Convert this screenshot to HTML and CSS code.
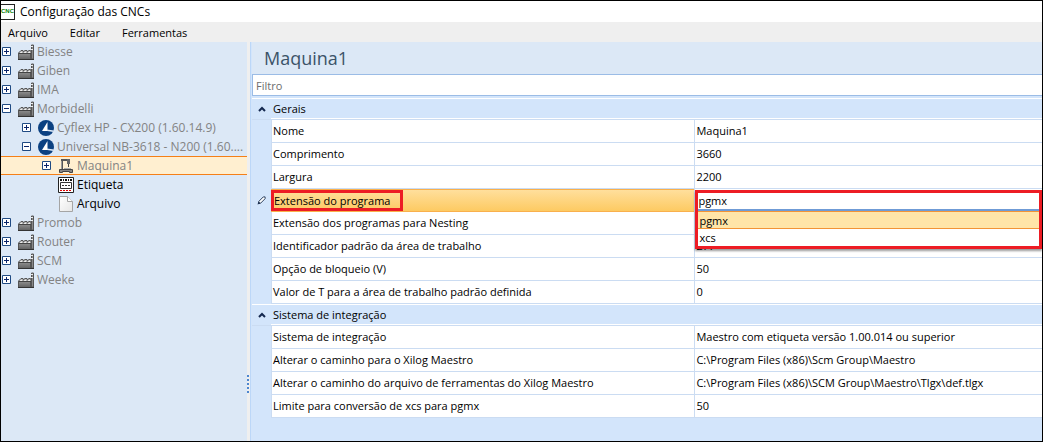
FILE: index.html
```html
<!DOCTYPE html>
<html lang="pt-BR">
<head>
    <meta charset="UTF-8">
    <meta name="viewport" content="width=device-width, initial-scale=1.0">
    <title>Configuração das CNCs</title>
    <link rel="stylesheet" href="styles.css">
</head>
<body>

<svg class="sprites" aria-hidden="true">
    <defs>
        <linearGradient id="metal" x1="0" y1="0" x2="0" y2="1">
            <stop offset="0" stop-color="#a5a5a5"/>
            <stop offset="1" stop-color="#606060"/>
        </linearGradient>
        <linearGradient id="paper" x1="0" y1="0" x2="1" y2="1">
            <stop offset="0" stop-color="#ffffff"/>
            <stop offset="1" stop-color="#e6e6e6"/>
        </linearGradient>
    </defs>
    <symbol id="factory" viewBox="0 0 16 16">
        <path d="M0.500 15.500V9L3 6.500H5V8L7 6.500H9V8L11 6.500H12.500V15.500Z" fill="url(#metal)" stroke="#555"/>
        <path d="M1.500 9L3 7.500H5L4 9ZM5.500 9L7 7.500H9L8 9ZM9.500 9L11 7.500H12.500V9Z" fill="#eee"/>
        <path d="M1 9.500H13" stroke="#444"/>
        <path d="M13.500 15V1H15.500V15Z" fill="#888" stroke="#555"/>
        <path d="M13 2.500H15M13 5.500H15" stroke="#eee"/>
        <path d="M0 15.500H16" stroke="#333"/>
    </symbol>
    <symbol id="brand" viewBox="0 0 16 16">
        <circle cx="8" cy="8" r="8" fill="#0b4182"/>
        <path d="M9.500 2L4 11H9.500Z" fill="#fff"/>
        <path d="M9 9.500L16 10.500L15.500 12L9 11Z" fill="#dce8f6"/>
    </symbol>
    <symbol id="machine" viewBox="0 0 16 16">
        <path d="M3 1H12V3H5V12H3Z" fill="#555"/>
        <path d="M3.500 3V11" stroke="#999"/>
        <path d="M9 1H12V6H9Z" fill="#666"/>
        <path d="M10.500 6V9" stroke="#444"/>
        <path d="M6 10.500H13" stroke="#aaa"/>
        <path d="M1.500 11.500H14.500V14.500H11.500V13.500H4.500V14.500H1.500Z" fill="#888" stroke="#444"/>
    </symbol>
    <symbol id="label" viewBox="0 0 16 16">
        <path d="M0.500 0.500H15.500V15.500H0.500Z" fill="#fff" stroke="#222"/>
        <path d="M2 3H14" stroke="#111" stroke-width="2" stroke-dasharray="2 1 1 1"/>
        <path d="M2.500 5.500H13.500V11.500H2.500Z" fill="#fff" stroke="#333"/>
        <path d="M4 8.500H12" stroke="#333" stroke-dasharray="2 1"/>
        <path d="M2 13.500H14" stroke="#e00000" stroke-dasharray="2 1"/>
    </symbol>
    <symbol id="file" viewBox="0 0 16 16">
        <path d="M1.500 0.500H9.500L14.500 5.500V15.500H1.500Z" fill="url(#paper)" stroke="#a5a5a5"/>
        <path d="M9.500 0.500V5.500H14.500" fill="#fff" stroke="#a5a5a5"/>
    </symbol>
    <symbol id="plus" viewBox="0 0 9 9">
        <path d="M0.500 0.500H8.500V8.500H0.500Z" fill="#fff" stroke="#1f4a83"/>
        <path d="M2 4.500H7M4.500 2V7" stroke="#0a246a"/>
    </symbol>
    <symbol id="minus" viewBox="0 0 9 9">
        <path d="M0.500 0.500H8.500V8.500H0.500Z" fill="#fff" stroke="#1f4a83"/>
        <path d="M2 4.500H7" stroke="#0a246a"/>
    </symbol>
    <symbol id="chevron" viewBox="0 0 8 6">
        <path d="M1 5L4 2L7 5" fill="none" stroke="#14284f" stroke-width="2"/>
    </symbol>
</svg>

<div class="window">
    <header class="title-bar">
        <span class="app-icon">CNC</span>
        <span>Configuração das CNCs</span>
    </header>

    <nav class="menu-bar">
        <button type="button">Arquivo</button>
        <button type="button">Editar</button>
        <button type="button">Ferramentas</button>
    </nav>

    <main class="content">
        <ul class="tree">
            <li class="node">
                <button class="toggle" type="button" aria-label="Expandir"><svg><use href="#plus"/></svg></button>
                <svg class="icon"><use href="#factory"/></svg><span>Biesse</span>
            </li>
            <li class="node">
                <button class="toggle" type="button" aria-label="Expandir"><svg><use href="#plus"/></svg></button>
                <svg class="icon"><use href="#factory"/></svg><span>Giben</span>
            </li>
            <li class="node">
                <button class="toggle" type="button" aria-label="Expandir"><svg><use href="#plus"/></svg></button>
                <svg class="icon"><use href="#factory"/></svg><span>IMA</span>
            </li>
            <li class="node">
                <button class="toggle" type="button" aria-label="Recolher"><svg><use href="#minus"/></svg></button>
                <svg class="icon"><use href="#factory"/></svg><span>Morbidelli</span>
            </li>
            <li class="node level-2">
                <button class="toggle" type="button" aria-label="Expandir"><svg><use href="#plus"/></svg></button>
                <svg class="icon"><use href="#brand"/></svg><span>Cyflex HP - CX200 (1.60.14.9)</span>
            </li>
            <li class="node level-2">
                <button class="toggle" type="button" aria-label="Recolher"><svg><use href="#minus"/></svg></button>
                <svg class="icon"><use href="#brand"/></svg><span>Universal NB-3618 - N200 (1.60....</span>
            </li>
            <li class="node level-3 selected">
                <button class="toggle" type="button" aria-label="Expandir"><svg><use href="#plus"/></svg></button>
                <svg class="icon"><use href="#machine"/></svg><span>Maquina1</span>
            </li>
            <li class="node level-3 leaf">
                <svg class="icon"><use href="#label"/></svg><span>Etiqueta</span>
            </li>
            <li class="node level-3 leaf">
                <svg class="icon"><use href="#file"/></svg><span>Arquivo</span>
            </li>
            <li class="node">
                <button class="toggle" type="button" aria-label="Expandir"><svg><use href="#plus"/></svg></button>
                <svg class="icon"><use href="#factory"/></svg><span>Promob</span>
            </li>
            <li class="node">
                <button class="toggle" type="button" aria-label="Expandir"><svg><use href="#plus"/></svg></button>
                <svg class="icon"><use href="#factory"/></svg><span>Router</span>
            </li>
            <li class="node">
                <button class="toggle" type="button" aria-label="Expandir"><svg><use href="#plus"/></svg></button>
                <svg class="icon"><use href="#factory"/></svg><span>SCM</span>
            </li>
            <li class="node">
                <button class="toggle" type="button" aria-label="Expandir"><svg><use href="#plus"/></svg></button>
                <svg class="icon"><use href="#factory"/></svg><span>Weeke</span>
            </li>
        </ul>

        <div class="splitter"><span class="grip"></span></div>

        <section class="details">
            <h1>Maquina1</h1>
            <input class="filter" type="text" placeholder="Filtro" aria-label="Filtro">

            <table class="properties">
                <colgroup>
                    <col class="col-gutter">
                    <col class="col-name">
                    <col class="col-value">
                </colgroup>
                <tbody>
                    <tr class="group">
                        <td><button class="collapse" type="button" aria-label="Recolher Gerais"><svg><use href="#chevron"/></svg></button></td>
                        <th colspan="2">Gerais</th>
                    </tr>
                    <tr><td></td><th>Nome</th><td>Maquina1</td></tr>
                    <tr><td></td><th>Comprimento</th><td>3660</td></tr>
                    <tr><td></td><th>Largura</th><td>2200</td></tr>
                    <tr class="editing">
                        <td>
                            <svg class="pencil" viewBox="0 0 10 10" aria-hidden="true">
                                <path d="M1.500 8.500L2 6L7 1H9V3L4 8Z" fill="#fff" stroke="#1c3050"/>
                                <path d="M0.500 9.500L2 6L4 8Z" fill="#1c3050"/>
                            </svg>
                        </td>
                        <th><label class="marked" for="extensao">Extensão do programa</label></th>
                        <td class="editor">
                            <div class="dropdown">
                                <select id="extensao">
                                    <option selected>pgmx</option>
                                    <option>xcs</option>
                                </select>
                                <ul class="options">
                                    <li class="active">pgmx</li>
                                    <li>xcs</li>
                                </ul>
                            </div>
                        </td>
                    </tr>
                    <tr><td></td><th>Extensão dos programas para Nesting</th><td></td></tr>
                    <tr><td></td><th>Identificador padrão da área de trabalho</th><td>277</td></tr>
                    <tr><td></td><th>Opção de bloqueio (V)</th><td>50</td></tr>
                    <tr><td></td><th>Valor de T para a área de trabalho padrão definida</th><td>0</td></tr>
                </tbody>
                <tbody>
                    <tr class="group">
                        <td><button class="collapse" type="button" aria-label="Recolher Sistema de integração"><svg><use href="#chevron"/></svg></button></td>
                        <th colspan="2">Sistema de integração</th>
                    </tr>
                    <tr><td></td><th>Sistema de integração</th><td>Maestro com etiqueta versão 1.00.014 ou superior</td></tr>
                    <tr><td></td><th>Alterar o caminho para o Xilog Maestro</th><td>C:\Program Files (x86)\Scm Group\Maestro</td></tr>
                    <tr><td></td><th>Alterar o caminho do arquivo de ferramentas do Xilog Maestro</th><td>C:\Program Files (x86)\SCM Group\Maestro\Tlgx\def.tlgx</td></tr>
                    <tr><td></td><th>Limite para conversão de xcs para pgmx</th><td>50</td></tr>
                </tbody>
            </table>
        </section>
    </main>
</div>

</body>
</html>
```
FILE: styles.css
```css
* {
    box-sizing: border-box;
}

body {
    margin: 0;
    font-family: "Open Sans", "Noto Sans", sans-serif;
    font-size: 11px;
    color: #000;
}

button {
    padding: 0;
    border: none;
    background: none;
    font: inherit;
    color: inherit;
}

ul {
    margin: 0;
    padding: 0;
    list-style: none;
}

.sprites {
    position: absolute;
    width: 0;
    height: 0;
}

.window {
    display: flex;
    flex-direction: column;
    min-height: 100vh;
    border: 1px solid #000;
    background: #fff;
}

.title-bar {
    display: flex;
    align-items: center;
    gap: 5px;
    height: 21px;
    font-size: 12px;
}

.app-icon {
    width: 14px;
    height: 16px;
    border: 1px solid #222;
    border-left: none;
    font: bold 6px/12px "Liberation Sans", sans-serif;
    color: #078307;
}

.menu-bar {
    display: flex;
    align-items: center;
    gap: 22px;
    height: 20px;
    padding-left: 7px;
    background: #efefef;
}

.content {
    display: flex;
    flex: 1;
    background: #efefef;
}

/* Tree */

.tree {
    width: 246px;
    background: #dce8f6;
    font-size: 12px;
    color: #838383;
}

.node {
    display: flex;
    align-items: center;
    height: 19px;
    padding-left: 1px;
    white-space: nowrap;
}

.level-2 {
    padding-left: 21px;
}

.level-3 {
    padding-left: 41px;
}

.leaf {
    padding-left: 57px;
    color: #000;
}

.selected {
    border-top: 1px solid #f57f17;
    border-bottom: 1px solid #f57f17;
    background: #ffefd0;
}

.toggle,
.toggle svg {
    display: block;
    width: 9px;
    height: 9px;
}

.toggle {
    margin-right: 7px;
}

.icon {
    width: 16px;
    height: 16px;
    margin-right: 3px;
}

.splitter {
    display: flex;
    flex-direction: column;
    justify-content: flex-end;
    width: 4px;
    padding-bottom: 48px;
    border-right: 1px solid #bcd7f8;
}

.grip {
    height: 18px;
    border-left: 2px dotted #4d86cf;
}

/* Property grid */

.details {
    flex: 1;
    min-width: 0;
    padding-left: 1px;
    background: #d3e5fb;
}

h1 {
    margin: 0;
    padding-left: 12px;
    background: #dce8f6;
    font-size: 18px;
    font-weight: normal;
    line-height: 32px;
    color: #3b5368;
}

.filter {
    display: block;
    width: 100%;
    height: 22px;
    margin-bottom: 2px;
    padding: 0 3px;
    border: 1px solid #9bbce6;
    border-right: none;
    background: #fff;
    font: inherit;
}

.filter::placeholder {
    color: #6d6d6d;
}

.properties {
    width: 100%;
    border-collapse: separate;
    border-spacing: 0;
    table-layout: fixed;
}

.col-gutter {
    width: 19px;
}

.col-value {
    width: 44%;
}

.properties tr {
    height: 23px;
}

.properties th,
.properties td {
    height: 23px;
    padding: 0 1px;
    border-bottom: 1px solid #cbdcf2;
    border-left: 1px solid #cbdcf2;
    background: #fff;
    font-weight: normal;
    line-height: 16px;
    text-align: left;
    white-space: nowrap;
}

.properties td:first-child {
    padding: 0;
    border-color: #d3e5fb;
    border-left: none;
    background: #d3e5fb;
}

.properties .group th,
.properties .group td:first-child {
    height: 22px;
    border-top: 1px solid #fff;
    border-bottom: 1px solid #cbdcf2;
    border-left: none;
    background: #d3e5fb;
}

.properties .group {
    height: 22px;
}

.properties .group th {
    padding-left: 2px;
    box-shadow: inset 0 -1px #fff;
}

.collapse,
.pencil {
    display: block;
    margin: 0 auto;
}

.collapse svg {
    display: block;
    width: 8px;
    height: 6px;
}

.pencil {
    width: 9px;
    height: 9px;
}

.properties .editing th {
    padding: 0;
    border-top: 1px solid #f9b04c;
    border-bottom: 1px solid #f9b04c;
    border-left: none;
    background: linear-gradient(#ffdf9c, #fdca62);
}

.marked {
    display: block;
    width: 132px;
    height: 21px;
    border: 3px solid #ed1c24;
    line-height: 15px;
}

.properties .editor {
    position: relative;
    padding: 0;
}

/* Open list lies over the rows below */
.dropdown {
    position: absolute;
    z-index: 1;
    top: 1px;
    left: 0;
    width: 100%;
    border: 3px solid #ed1c24;
    background: #fff;
    box-shadow: 0 2px 2px rgba(0, 0, 0, 0.4);
}

.dropdown select {
    display: block;
    width: 100%;
    height: 18px;
    padding: 0;
    border: none;
    border-bottom: 2px solid #6f9bd6;
    appearance: none;
    background: #fff;
    font: inherit;
    color: inherit;
}

.options li {
    height: 17px;
    padding-left: 1px;
    line-height: 17px;
}

.options .active {
    height: 18px;
    border-top: 1px solid #f29436;
    border-bottom: 1px solid #f29436;
    background: #ffe5a8;
}
```
